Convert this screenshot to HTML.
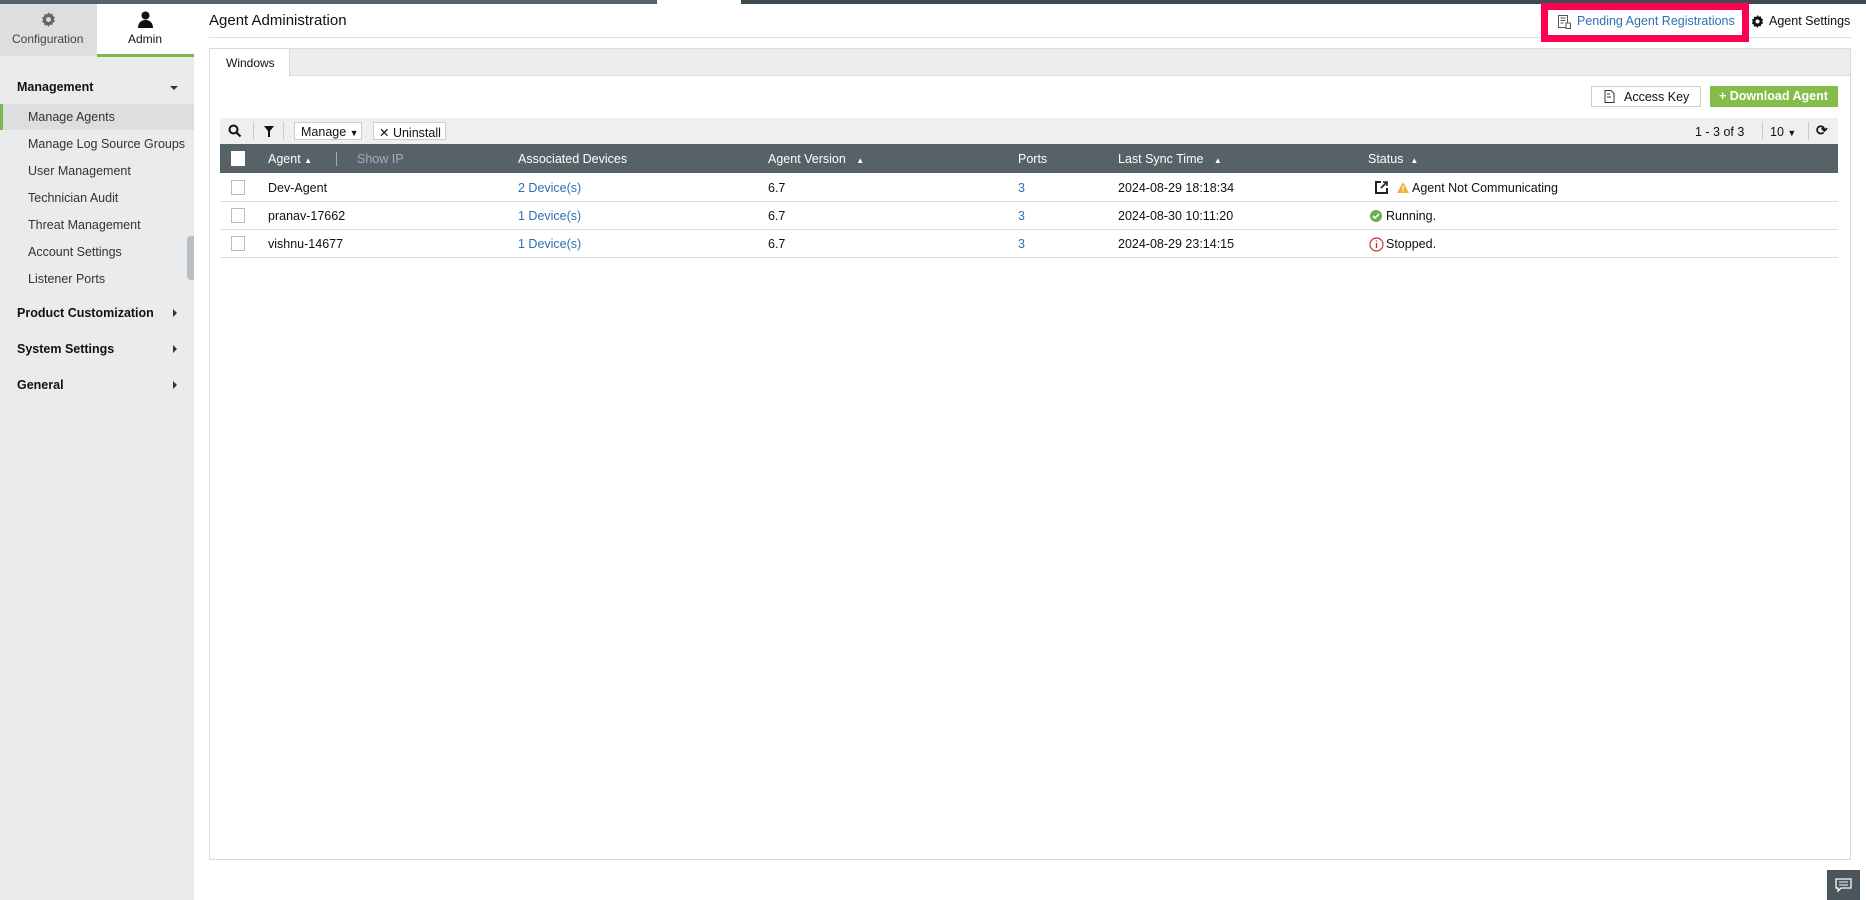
<!DOCTYPE html>
<html><head><meta charset="utf-8"><style>
*{margin:0;padding:0;box-sizing:border-box}
body{width:1866px;height:900px;position:relative;overflow:hidden;background:#fff;font-family:"Liberation Sans",Arial,sans-serif;font-size:12.5px;color:#111}
.a{position:absolute;white-space:nowrap}
.lnk{color:#2f6fb3}
.hd{color:#fff}
</style></head><body>
<div class="a" style="left:0;top:0;width:657px;height:4px;background:#56616a"></div>
<div class="a" style="left:741px;top:0;width:1125px;height:4px;background:#3f4a50"></div>
<div class="a" style="left:0;top:4px;width:194px;height:896px;background:#e9ebec"></div>
<div class="a" style="left:0;top:4px;width:97px;height:52px;background:#dcdedf"></div>
<div class="a" style="left:97px;top:4px;width:97px;height:51px;background:#fff"></div>
<div class="a" style="left:97px;top:54px;width:97px;height:3px;background:#7cb94a"></div>
<svg class="a" style="left:41px;top:12px" width="15" height="15" viewBox="0 0 16 16"><path fill="#666" d="M8 0l1.5 2.2 2.6-.6.4 2.6 2.4 1.2-1.1 2.4 1.1 2.4-2.4 1.2-.4 2.6-2.6-.6L8 16l-1.5-2.2-2.6.6-.4-2.6L1.1 10.6 2.2 8.2 1.1 5.8l2.4-1.2.4-2.6 2.6.6z"/><circle cx="8" cy="8" r="2.6" fill="#dcdedf"/></svg>
<div class="a" style="left:12px;top:32px;color:#444;font-size:12px">Configuration</div>
<svg class="a" style="left:138px;top:11px" width="15" height="17" viewBox="0 0 15 17"><circle cx="7.5" cy="4.5" r="4" fill="#111"/><path d="M0 17c0-5 3-8 7.5-8S15 12 15 17z" fill="#111"/></svg>
<div class="a" style="left:128px;top:32px;font-size:12px">Admin</div>
<div class="a" style="left:17px;top:80px;font-weight:bold;font-size:12.5px">Management</div>
<div class="a" style="left:170px;top:86px;border:4px solid transparent;border-top:4px solid #333"></div>
<div class="a" style="left:0;top:104px;width:194px;height:26px;background:#dcdedf"></div>
<div class="a" style="left:0;top:104px;width:3px;height:26px;background:#7cb94a"></div>
<div class="a" style="left:28px;top:110px;color:#333">Manage Agents</div>
<div class="a" style="left:28px;top:137px;color:#333">Manage Log Source Groups</div>
<div class="a" style="left:28px;top:164px;color:#333">User Management</div>
<div class="a" style="left:28px;top:191px;color:#333">Technician Audit</div>
<div class="a" style="left:28px;top:218px;color:#333">Threat Management</div>
<div class="a" style="left:28px;top:245px;color:#333">Account Settings</div>
<div class="a" style="left:28px;top:272px;color:#333">Listener Ports</div>
<div class="a" style="left:187px;top:236px;width:7px;height:44px;background:#b9bdc0;border-radius:4px 0 0 4px"></div>
<div class="a" style="left:17px;top:306px;font-weight:bold">Product Customization</div>
<div class="a" style="left:17px;top:342px;font-weight:bold">System Settings</div>
<div class="a" style="left:17px;top:378px;font-weight:bold">General</div>
<div class="a" style="left:173px;top:309px;border:4px solid transparent;border-left:4px solid #333"></div>
<div class="a" style="left:173px;top:345px;border:4px solid transparent;border-left:4px solid #333"></div>
<div class="a" style="left:173px;top:381px;border:4px solid transparent;border-left:4px solid #333"></div>
<div class="a" style="left:209px;top:12px;font-size:15px">Agent Administration</div>
<div class="a" style="left:209px;top:37px;width:1642px;height:1px;background:#ddd"></div>
<div class="a" style="left:1541px;top:3px;width:208px;height:39px;border:7px solid #ff0050;background:#fff"></div>
<svg class="a" style="left:1558px;top:15px" width="13" height="14" viewBox="0 0 13 14"><rect x=".5" y=".5" width="9" height="12" fill="none" stroke="#555"/><path d="M2.5 3h5M2.5 5.5h5M2.5 8h3" stroke="#555"/><rect x="8" y="8" width="4.5" height="5.5" fill="#fff" stroke="#555"/></svg>
<div class="a lnk" style="left:1577px;top:14px;font-size:12.5px">Pending Agent Registrations</div>
<svg class="a" style="left:1751px;top:15px" width="13" height="13" viewBox="0 0 16 16"><path fill="#111" d="M8 0l1.5 2.2 2.6-.6.4 2.6 2.4 1.2-1.1 2.4 1.1 2.4-2.4 1.2-.4 2.6-2.6-.6L8 16l-1.5-2.2-2.6.6-.4-2.6L1.1 10.6 2.2 8.2 1.1 5.8l2.4-1.2.4-2.6 2.6.6z"/><circle cx="8" cy="8" r="2.5" fill="#fff"/></svg>
<div class="a" style="left:1769px;top:14px">Agent Settings</div>
<div class="a" style="left:209px;top:48px;width:1642px;height:812px;border:1px solid #d8dadb"></div>
<div class="a" style="left:210px;top:49px;width:1640px;height:27px;background:#ebeded;border-bottom:1px solid #d8dadb"></div>
<div class="a" style="left:210px;top:49px;width:80px;height:28px;background:#fff;border-right:1px solid #d8dadb"></div>
<div class="a" style="left:226px;top:56px;font-size:12px">Windows</div>
<div class="a" style="left:1591px;top:86px;width:110px;height:21px;border:1px solid #ccc;background:#fff"></div>
<svg class="a" style="left:1604px;top:90px" width="12" height="13" viewBox="0 0 12 13"><path d="M1 .5h6l3 3v9H1z" fill="none" stroke="#333"/><path d="M3 4h3M3 7h4" stroke="#333"/></svg>
<div class="a" style="left:1624px;top:90px">Access Key</div>
<div class="a" style="left:1710px;top:86px;width:128px;height:21px;background:#84bd4a"></div>
<div class="a" style="left:1719px;top:89px;color:#fff;font-weight:bold;font-size:12.5px">+ Download Agent</div>
<div class="a" style="left:220px;top:118px;width:1618px;height:26px;background:#eeefef"></div>
<svg class="a" style="left:228px;top:124px" width="14" height="14" viewBox="0 0 14 14"><circle cx="5.5" cy="5.5" r="4" fill="none" stroke="#111" stroke-width="2"/><path d="M8.5 8.5l4 4" stroke="#111" stroke-width="2"/></svg>
<div class="a" style="left:253px;top:122px;width:1px;height:18px;background:#ccc"></div>
<svg class="a" style="left:264px;top:126px" width="10" height="11" viewBox="0 0 10 11"><path d="M0 0h10L6 5v6H4V5z" fill="#111"/></svg>
<div class="a" style="left:283px;top:122px;width:1px;height:18px;background:#ccc"></div>
<div class="a" style="left:294px;top:122px;width:68px;height:18px;border:1px solid #ccc;background:#fff;padding:2px 6px">Manage <span style="font-size:9px">▼</span></div>
<div class="a" style="left:373px;top:122px;width:73px;height:18px;border:1px solid #ccc;background:#fff;padding:2px 5px">✕ Uninstall</div>
<div class="a" style="left:1695px;top:125px">1 - 3 of 3</div>
<div class="a" style="left:1762px;top:122px;width:1px;height:18px;background:#ccc"></div>
<div class="a" style="left:1770px;top:125px">10 <span style="font-size:9px">▼</span></div>
<div class="a" style="left:1808px;top:122px;width:1px;height:18px;background:#ccc"></div>
<div class="a" style="left:1816px;top:122px;font-size:14px;font-weight:bold">⟳</div>
<div class="a" style="left:220px;top:144px;width:1618px;height:29px;background:#566168"></div>
<div class="a" style="left:231px;top:151px;width:14px;height:15px;background:#fff"></div>
<div class="a hd" style="left:268px;top:152px">Agent <span style="font-size:8px">▲</span></div>
<div class="a" style="left:336px;top:152px;width:1px;height:14px;background:#aaa"></div>
<div class="a" style="left:357px;top:152px;color:#aab">Show IP</div>
<div class="a hd" style="left:518px;top:152px">Associated Devices</div>
<div class="a hd" style="left:768px;top:152px">Agent Version &nbsp;&nbsp;<span style="font-size:8px">▲</span></div>
<div class="a hd" style="left:1018px;top:152px">Ports</div>
<div class="a hd" style="left:1118px;top:152px">Last Sync Time &nbsp;&nbsp;<span style="font-size:8px">▲</span></div>
<div class="a hd" style="left:1368px;top:152px">Status &nbsp;<span style="font-size:8px">▲</span></div>
<div class="a" style="left:220px;top:201px;width:1618px;height:1px;background:#ddd"></div>
<div class="a" style="left:220px;top:229px;width:1618px;height:1px;background:#ddd"></div>
<div class="a" style="left:220px;top:257px;width:1618px;height:1px;background:#ddd"></div>
<div class="a" style="left:231px;top:180px;width:14px;height:15px;border:1px solid #bbb"></div>
<div class="a" style="left:231px;top:208px;width:14px;height:15px;border:1px solid #bbb"></div>
<div class="a" style="left:231px;top:236px;width:14px;height:15px;border:1px solid #bbb"></div>
<div class="a" style="left:268px;top:181px">Dev-Agent</div>
<div class="a" style="left:268px;top:209px">pranav-17662</div>
<div class="a" style="left:268px;top:237px">vishnu-14677</div>
<div class="a lnk" style="left:518px;top:181px">2 Device(s)</div>
<div class="a lnk" style="left:518px;top:209px">1 Device(s)</div>
<div class="a lnk" style="left:518px;top:237px">1 Device(s)</div>
<div class="a" style="left:768px;top:181px">6.7</div>
<div class="a" style="left:768px;top:209px">6.7</div>
<div class="a" style="left:768px;top:237px">6.7</div>
<div class="a lnk" style="left:1018px;top:181px">3</div>
<div class="a lnk" style="left:1018px;top:209px">3</div>
<div class="a lnk" style="left:1018px;top:237px">3</div>
<div class="a" style="left:1118px;top:181px">2024-08-29 18:18:34</div>
<div class="a" style="left:1118px;top:209px">2024-08-30 10:11:20</div>
<div class="a" style="left:1118px;top:237px">2024-08-29 23:14:15</div>
<svg class="a" style="left:1375px;top:181px" width="13" height="13" viewBox="0 0 13 13"><path d="M6 1H1v11h11V7" fill="none" stroke="#222" stroke-width="2"/><path d="M6 7l6-6M8 1h4v4" fill="none" stroke="#222" stroke-width="1.6"/></svg>
<svg class="a" style="left:1397px;top:182px" width="12" height="11" viewBox="0 0 12 11"><path d="M6 0l6 11H0z" fill="#f0b43c"/><path d="M6 4v3.5M6 8.5v1" stroke="#fff" stroke-width="1.3"/></svg>
<div class="a" style="left:1412px;top:181px">Agent Not Communicating</div>
<svg class="a" style="left:1370px;top:210px" width="12" height="12" viewBox="0 0 12 12"><circle cx="6" cy="6" r="6" fill="#6ab04c"/><path d="M3 6l2 2 4-4" fill="none" stroke="#fff" stroke-width="1.6"/></svg>
<div class="a" style="left:1386px;top:209px">Running.</div>
<svg class="a" style="left:1369px;top:237px" width="15" height="15" viewBox="0 0 15 15"><circle cx="7.5" cy="7.5" r="6.5" fill="none" stroke="#c0392b" stroke-width="1.2"/><path d="M7.5 6v5M7.5 3.5v1.3" stroke="#c0392b" stroke-width="1.4"/></svg>
<div class="a" style="left:1386px;top:237px">Stopped.</div>
<div class="a" style="left:1827px;top:870px;width:33px;height:30px;background:#4a555c"></div>
<svg class="a" style="left:1835px;top:878px" width="17" height="15" viewBox="0 0 17 15"><path d="M1 1h15v9H6l-3 3v-3H1z" fill="none" stroke="#fff" stroke-width="1.3"/><path d="M4 4h9M4 7h9" stroke="#fff"/></svg>
</body></html>
